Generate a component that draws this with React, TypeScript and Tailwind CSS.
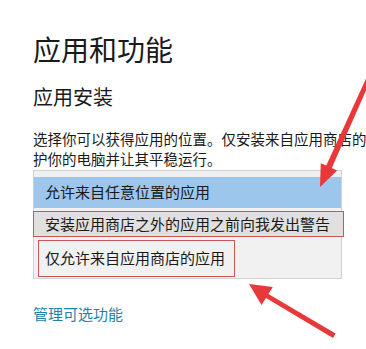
import React from "react";

export default function App() {
  return (
    <div
      className="relative w-[366px] h-[349px] overflow-hidden bg-white text-[#1a1a1a]"
      style={{ fontFamily: '"Noto Sans CJK SC", "Noto Sans", sans-serif' }}
    >
      <div className="flex flex-col pl-[33px] pt-[35px]">
        <div className="text-[28px] leading-[28px] whitespace-nowrap">应用和功能</div>
        <div className="mt-[24px] text-[20px] leading-[20px] whitespace-nowrap">应用安装</div>
        <div className="mt-[22px] w-[333px] overflow-hidden text-[14.5px] leading-[20px] whitespace-nowrap">
          选择你可以获得应用的位置。仅安装来自应用商店的应用有助于保
          <br />
          护你的电脑并让其平稳运行。
        </div>
        <div className="mt-[1px] w-[309px] h-[109px] border border-[#d2d2d2] bg-[#f1f1f1] flex flex-col">
          <div className="h-[6px] bg-[#eef0f2]" />
          <div className="h-[31px] bg-[#9cc6ec] flex items-center pl-[11px] text-[15px] whitespace-nowrap">
            允许来自任意位置的应用
          </div>
          <div className="mt-[3px] -ml-px w-[311px] h-[26px] bg-[#e0e0e0] border border-[#c9575a] flex items-center pl-[11px] text-[15px] whitespace-nowrap">
            安装应用商店之外的应用之前向我发出警告
          </div>
          <div className="mt-[3px] ml-[4px] w-[197px] h-[37px] border border-[#c9575a] flex items-center pl-[6px] text-[15px] whitespace-nowrap">
            仅允许来自应用商店的应用
          </div>
        </div>
        <div className="mt-[25px] text-[15px] leading-[20px] text-[#1f82a9] whitespace-nowrap">管理可选功能</div>
      </div>
      <svg className="absolute inset-0 pointer-events-none" width="366" height="349" viewBox="0 0 366 349">
        <polygon
          points="370.2,81 331.8,168.1 337.2,170.6 320,187 320.8,163.2 326.3,165.6 365.8,79"
          fill="#e8383a"
        />
        <polygon
          points="333,338 266,298 261.5,305 249,284 272.8,287 268.4,294 335.6,333.5"
          fill="#e8383a"
        />
      </svg>
    </div>
  );
}
